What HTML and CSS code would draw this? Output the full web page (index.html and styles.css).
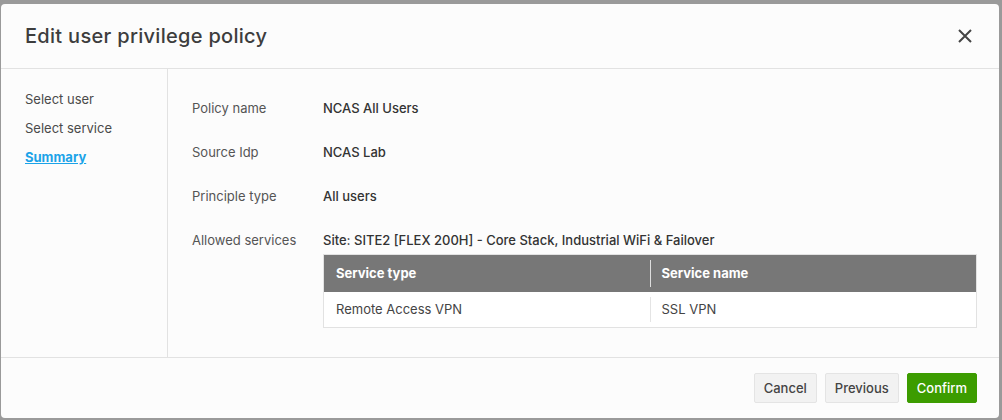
FILE: index.html
```html
<!DOCTYPE html>
<html>
<head>
<meta charset="utf-8">
<title>Edit user privilege policy</title>
<link rel="stylesheet" href="styles.css">
</head>
<body>
<div class="modal">
  <header class="modal-header">
    <h1 class="modal-title">Edit user privilege policy</h1>
    <button class="close-btn" aria-label="Close">
      <svg width="16" height="16" viewBox="0 0 16 16"><path d="M2 2L14 14M14 2L2 14" stroke="#444" stroke-width="2" fill="none"/></svg>
    </button>
  </header>
  <div class="modal-body">
    <nav class="steps">
      <div class="step">Select user</div>
      <div class="step">Select service</div>
      <div class="step active">Summary</div>
    </nav>
    <section class="summary">
      <div class="row">
        <div class="label">Policy name</div>
        <div class="value">NCAS All Users</div>
      </div>
      <div class="row">
        <div class="label">Source Idp</div>
        <div class="value">NCAS Lab</div>
      </div>
      <div class="row">
        <div class="label">Principle type</div>
        <div class="value">All users</div>
      </div>
      <div class="row">
        <div class="label">Allowed services</div>
        <div class="value services">
          <div class="site">Site: SITE2 [FLEX 200H] - Core Stack, Industrial WiFi &amp; Failover</div>
          <table class="svc-table">
            <thead>
              <tr><th>Service type</th><th>Service name</th></tr>
            </thead>
            <tbody>
              <tr><td>Remote Access VPN</td><td>SSL VPN</td></tr>
            </tbody>
          </table>
        </div>
      </div>
    </section>
  </div>
  <footer class="modal-footer">
    <button class="btn">Cancel</button>
    <button class="btn">Previous</button>
    <button class="btn primary">Confirm</button>
  </footer>
</div>
</body>
</html>
```

FILE: styles.css
```css
* { box-sizing: border-box; }

html, body {
  margin: 0;
  height: 100%;
}

body {
  background: #9a9a9a;
  font-family: "Inter", "Liberation Sans", sans-serif;
  color: #444;
  padding: 4px 3px 2px 1px;
}

.modal {
  background: #fcfcfc;
  border-radius: 4px;
  height: 414px;
  display: flex;
  flex-direction: column;
}

.modal-header {
  height: 65px;
  flex: none;
  border-bottom: 1px solid #e2e2e2;
  display: flex;
  align-items: center;
  justify-content: space-between;
  padding: 0 26px 0 24px;
}

.modal-title {
  margin: 0;
  font-size: 20px;
  font-weight: 500;
  color: #3d3d3d;
  letter-spacing: 0.3px;
}

.close-btn {
  border: 0;
  background: none;
  padding: 0;
  width: 16px;
  height: 16px;
  display: flex;
}

.modal-body {
  display: flex;
  flex: none;
  height: 289px;
  border-bottom: 1px solid #e2e2e2;
}

.steps {
  width: 167px;
  border-right: 1px solid #e2e2e2;
  padding: 21px 0 0 24px;
  display: flex;
  flex-direction: column;
  gap: 11px;
}

.step {
  font-size: 13px;
  line-height: 18px;
  color: #4a4a4a;
}

.step.active {
  color: #1ba3e8;
  font-weight: 700;
  text-decoration: underline;
}

.summary {
  flex: 1;
  padding: 30px 22px 0 24px;
  display: flex;
  flex-direction: column;
  gap: 26px;
}

.row {
  display: flex;
  font-size: 13px;
  line-height: 18px;
}

.label {
  width: 131px;
  color: #555;
}

.value {
  flex: 1;
  color: #333;
  font-weight: 500;
}

.services .site {
  margin-bottom: 5px;
}

.svc-table {
  width: 100%;
  border-collapse: collapse;
  border: 1px solid #e2e2e2;
}

.svc-table th {
  background: #777;
  color: #fff;
  font-weight: 700;
  text-align: left;
  height: 37px;
  padding: 0 12px;
  position: relative;
}

.svc-table th + th::before,
.svc-table td + td::before {
  content: "";
  position: absolute;
  left: 0;
  top: 5px;
  bottom: 5px;
  border-left: 1px solid #ddd;
}

.svc-table td + td::before { border-left-color: #e4e4e4; }

.svc-table td {
  height: 36px;
  padding: 0 12px;
  color: #444;
  font-weight: 400;
  background: #fff;
  position: relative;
}

.svc-table th:first-child,
.svc-table td:first-child { width: 326px; }

.modal-footer {
  flex: 1;
  display: flex;
  justify-content: flex-end;
  align-items: center;
  gap: 8px;
  padding: 0 22px 0 0;
}

.btn {
  font-family: inherit;
  font-size: 13px;
  font-weight: 500;
  height: 30px;
  padding: 0 9px;
  border: 1px solid #e4e4e4;
  background: #f2f2f2;
  color: #444;
  border-radius: 2px;
}

.btn.primary {
  background: #3c9c00;
  border-color: #3c9c00;
  color: #fff;
  padding: 0 9px;
}
```
